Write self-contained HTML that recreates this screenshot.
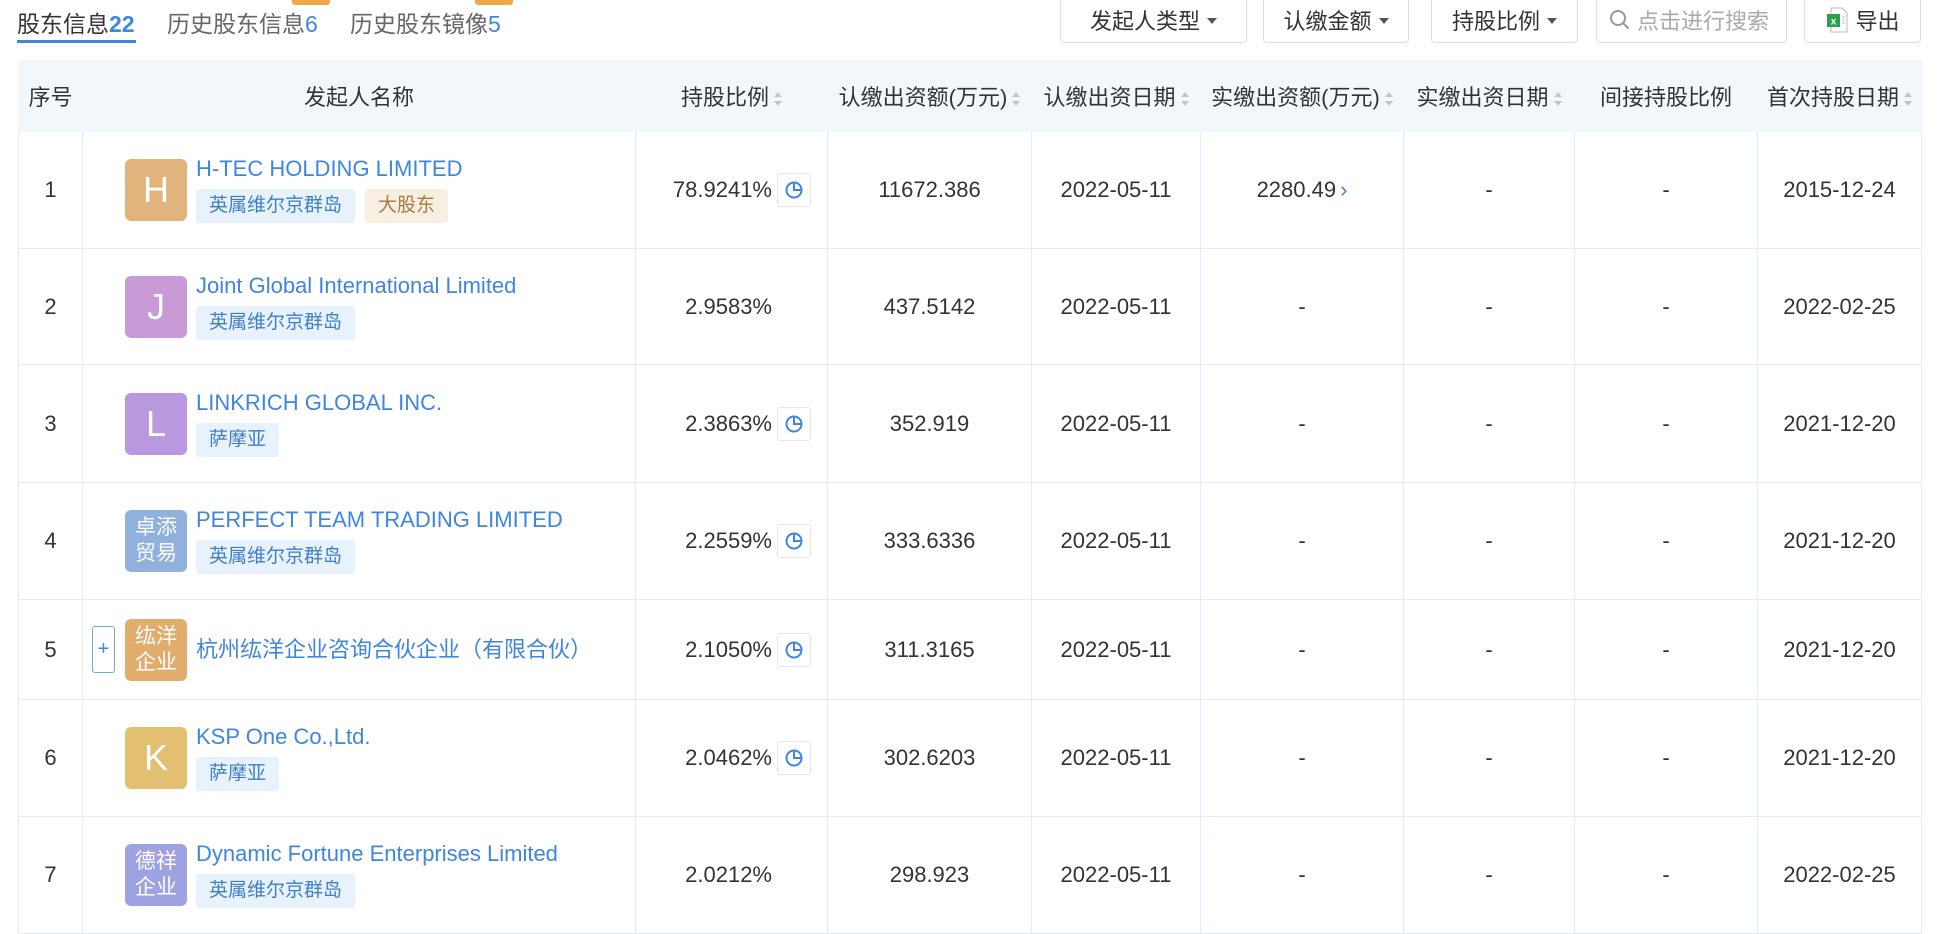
<!DOCTYPE html>
<html><head><meta charset="utf-8">
<style>
*{margin:0;padding:0;box-sizing:border-box}
body{width:1938px;height:922px;overflow:hidden;background:#fff;font-family:"Liberation Sans","Noto Sans CJK SC",sans-serif;color:#333;position:relative}
.tab{position:absolute;top:5px;font-size:23px;color:#666;white-space:nowrap}
.tab b{font-weight:normal;color:#3f86dc}
.badge{position:absolute;top:0;height:5px;background:#f0a848;border-radius:0 0 3px 3px}
.btn{position:absolute;top:-4px;height:47px;border:1px solid #ddd;border-radius:4px;font-size:22px;color:#333;display:flex;align-items:center;justify-content:center;background:#fff}
.caret{display:inline-block;width:0;height:0;border-left:5px solid transparent;border-right:5px solid transparent;border-top:6px solid #555;margin-left:7px;margin-top:2px}
table{position:absolute;left:18px;top:60px;border-collapse:collapse;table-layout:fixed;width:1903px}
th{background:#f2f7fc;font-weight:normal;font-size:22px;height:71px;color:#333;white-space:nowrap;border:1px solid #f2f7fc}
td{border:1px solid #e3ebf4;font-size:22px;text-align:center;color:#333;white-space:nowrap}
.sort{display:inline-block;width:8px;height:14px;vertical-align:middle;margin-left:5px;position:relative}
.sort:before{content:"";position:absolute;top:0;left:0;border-left:4px solid transparent;border-right:4px solid transparent;border-bottom:5px solid #c4c4c4}
.sort:after{content:"";position:absolute;bottom:0;left:0;border-left:4px solid transparent;border-right:4px solid transparent;border-top:5px solid #c4c4c4}
.nm{display:flex;align-items:center;padding-left:42px;text-align:left}
.av{width:62px;height:62px;border-radius:6px;color:#fff;font-size:36px;display:flex;align-items:center;justify-content:center;flex:none;margin-right:9px;line-height:1.1;text-align:center}
.av.s{font-size:21px;line-height:26px}
.link{color:#3f86dc;font-size:22px;line-height:24px}
.tags{margin-top:8px;display:flex;gap:10px}
.tag{height:34px;line-height:34px;padding:0 13px;font-size:19px;background:#e7f2fd;color:#3f7fc8;border-radius:3px}
.tag.o{background:#f8efe3;color:#a97b43}
.pct{display:flex;align-items:center;justify-content:flex-end;padding-right:16px}
.pie{width:34px;height:34px;border:1px solid #e6e6e6;border-radius:3px;margin-left:5px;display:flex;align-items:center;justify-content:center}
.pct.np{padding-right:55px}
.plus{width:23px;height:47px;border:1px solid #7aa8de;border-radius:3px;color:#3f86dc;font-size:20px;display:flex;align-items:center;justify-content:center;margin-left:-33px;margin-right:10px;flex:none}
</style></head><body>
<div class="tab" style="left:17px;color:#333">股东信息<b style="font-weight:bold">22</b></div>
<div style="position:absolute;left:17px;top:40px;width:119px;height:3px;background:#3f86dc"></div>
<div class="badge" style="left:292px;width:38px"></div>
<div class="tab" style="left:167px">历史股东信息<b>6</b></div>
<div class="badge" style="left:475px;width:38px"></div>
<div class="tab" style="left:350px">历史股东镜像<b>5</b></div>

<div class="btn" style="left:1060px;width:187px">发起人类型<span class="caret"></span></div>
<div class="btn" style="left:1263px;width:146px">认缴金额<span class="caret"></span></div>
<div class="btn" style="left:1431px;width:147px">持股比例<span class="caret"></span></div>
<div class="btn" style="left:1596px;width:191px;color:#aaa;justify-content:flex-start;padding-left:12px">
<svg width="22" height="22" viewBox="0 0 22 22" style="margin-right:6px"><circle cx="9" cy="9" r="7" fill="none" stroke="#999" stroke-width="2"/><path d="M14 14l5 5" stroke="#999" stroke-width="2.2" stroke-linecap="round"/></svg>点击进行搜索</div>
<div class="btn" style="left:1804px;width:117px">
<svg width="24" height="28" viewBox="0 0 24 28" style="margin-right:6px"><path d="M6 2h11l5 5v19H6z" fill="#fff" stroke="#bbb"/><rect x="2" y="8" width="13" height="13" fill="#2e9e4f"/><text x="8.5" y="18.5" font-size="10" fill="#fff" text-anchor="middle" font-family="Liberation Sans" font-weight="bold">x</text><path d="M17 11h3M17 14h3M17 17h3" stroke="#bbb"/></svg>导出</div>

<table>
<colgroup><col style="width:64px"><col style="width:553px"><col style="width:192px"><col style="width:204px"><col style="width:169px"><col style="width:203px"><col style="width:171px"><col style="width:183px"><col style="width:164px"></colgroup>
<tr><th>序号</th><th>发起人名称</th><th>持股比例<span class="sort"></span></th><th>认缴出资额(万元)<span class="sort"></span></th><th>认缴出资日期<span class="sort"></span></th><th>实缴出资额(万元)<span class="sort"></span></th><th>实缴出资日期<span class="sort"></span></th><th>间接持股比例</th><th>首次持股日期<span class="sort"></span></th></tr>

<tr style="height:117px"><td>1</td><td><div class="nm"><div class="av" style="background:#e0b47c">H</div><div><div class="link">H-TEC HOLDING LIMITED</div><div class="tags"><span class="tag">英属维尔京群岛</span><span class="tag o">大股东</span></div></div></div></td>
<td><div class="pct">78.9241%<span class="pie"><svg width="20" height="20" viewBox="0 0 20 20"><circle cx="10" cy="10" r="7.5" fill="none" stroke="#3f86dc" stroke-width="2"/><path d="M10 2.5V10H17.5" fill="none" stroke="#3f86dc" stroke-width="2"/></svg></span></div></td><td>11672.386</td><td>2022-05-11</td><td>2280.49<span style="color:#3f86dc;margin-left:4px">›</span></td><td>-</td><td>-</td><td>2015-12-24</td></tr>

<tr style="height:116px"><td>2</td><td><div class="nm"><div class="av" style="background:#c99bd6">J</div><div><div class="link">Joint Global International Limited</div><div class="tags"><span class="tag">英属维尔京群岛</span></div></div></div></td>
<td><div class="pct np">2.9583%</div></td><td>437.5142</td><td>2022-05-11</td><td>-</td><td>-</td><td>-</td><td>2022-02-25</td></tr>

<tr style="height:118px"><td>3</td><td><div class="nm"><div class="av" style="background:#b998e0">L</div><div><div class="link">LINKRICH GLOBAL INC.</div><div class="tags"><span class="tag">萨摩亚</span></div></div></div></td>
<td><div class="pct">2.3863%<span class="pie"><svg width="20" height="20" viewBox="0 0 20 20"><circle cx="10" cy="10" r="7.5" fill="none" stroke="#3f86dc" stroke-width="2"/><path d="M10 2.5V10H17.5" fill="none" stroke="#3f86dc" stroke-width="2"/></svg></span></div></td><td>352.919</td><td>2022-05-11</td><td>-</td><td>-</td><td>-</td><td>2021-12-20</td></tr>

<tr style="height:117px"><td>4</td><td><div class="nm"><div class="av s" style="background:#8fb1dc">卓添<br>贸易</div><div><div class="link">PERFECT TEAM TRADING LIMITED</div><div class="tags"><span class="tag">英属维尔京群岛</span></div></div></div></td>
<td><div class="pct">2.2559%<span class="pie"><svg width="20" height="20" viewBox="0 0 20 20"><circle cx="10" cy="10" r="7.5" fill="none" stroke="#3f86dc" stroke-width="2"/><path d="M10 2.5V10H17.5" fill="none" stroke="#3f86dc" stroke-width="2"/></svg></span></div></td><td>333.6336</td><td>2022-05-11</td><td>-</td><td>-</td><td>-</td><td>2021-12-20</td></tr>

<tr style="height:100px"><td>5</td><td><div class="nm"><div class="plus">+</div><div class="av s" style="background:#e0ad6c">纮洋<br>企业</div><div><div class="link">杭州纮洋企业咨询合伙企业（有限合伙）</div></div></div></td>
<td><div class="pct">2.1050%<span class="pie"><svg width="20" height="20" viewBox="0 0 20 20"><circle cx="10" cy="10" r="7.5" fill="none" stroke="#3f86dc" stroke-width="2"/><path d="M10 2.5V10H17.5" fill="none" stroke="#3f86dc" stroke-width="2"/></svg></span></div></td><td>311.3165</td><td>2022-05-11</td><td>-</td><td>-</td><td>-</td><td>2021-12-20</td></tr>

<tr style="height:117px"><td>6</td><td><div class="nm"><div class="av" style="background:#e3c071">K</div><div><div class="link">KSP One Co.,Ltd.</div><div class="tags"><span class="tag">萨摩亚</span></div></div></div></td>
<td><div class="pct">2.0462%<span class="pie"><svg width="20" height="20" viewBox="0 0 20 20"><circle cx="10" cy="10" r="7.5" fill="none" stroke="#3f86dc" stroke-width="2"/><path d="M10 2.5V10H17.5" fill="none" stroke="#3f86dc" stroke-width="2"/></svg></span></div></td><td>302.6203</td><td>2022-05-11</td><td>-</td><td>-</td><td>-</td><td>2021-12-20</td></tr>

<tr style="height:117px"><td>7</td><td><div class="nm"><div class="av s" style="background:#9ea2e0">德祥<br>企业</div><div><div class="link">Dynamic Fortune Enterprises Limited</div><div class="tags"><span class="tag">英属维尔京群岛</span></div></div></div></td>
<td><div class="pct np">2.0212%</div></td><td>298.923</td><td>2022-05-11</td><td>-</td><td>-</td><td>-</td><td>2022-02-25</td></tr>
</table>
</body></html>
